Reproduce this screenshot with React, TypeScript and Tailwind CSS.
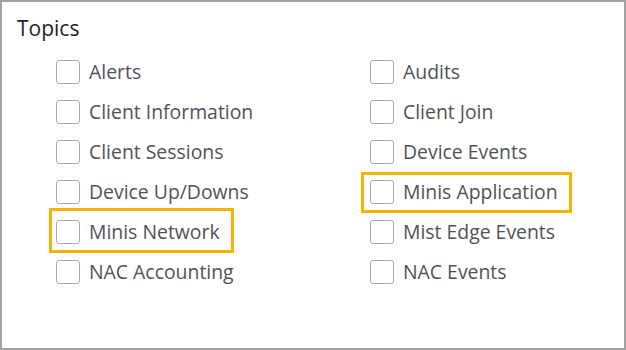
const left = ['Alerts', 'Client Information', 'Client Sessions', 'Device Up/Downs', 'Minis Network', 'NAC Accounting'];
const right = ['Audits', 'Client Join', 'Device Events', 'Minis Application', 'Mist Edge Events', 'NAC Events'];

function Topic({ label }: { label: string }) {
  return (
    <label className="relative flex h-10 items-center gap-[9px]">
      {label === 'Minis Network' && (
        <span className="absolute left-[-7px] top-[-4px] h-[45px] w-[185px] border-[3px] border-[#f5b400]" />
      )}
      {label === 'Minis Application' && (
        <span className="absolute left-[-9px] top-0 h-[41px] w-[211px] border-[3px] border-[#f5b400]" />
      )}
      <span className="h-6 w-6 shrink-0 rounded-[3px] border border-[#a9a9a9] bg-white" />
      <span className="text-[19.4px] text-[#505356]">{label}</span>
    </label>
  );
}

export default function App() {
  return (
    <div
      className="h-[350px] w-[626px] border-2 border-[#a3a3a3] bg-white pt-3"
      style={{ fontFamily: '"Open Sans", sans-serif' }}
    >
      <h2 className="pl-[15px] text-[21px] leading-7 text-[#1f2227]">Topics</h2>
      <div className="mt-[10px] grid grid-cols-[314px_1fr] grid-flow-col grid-rows-6 pl-[54px]">
        {left.map((t) => (
          <Topic key={t} label={t} />
        ))}
        {right.map((t) => (
          <Topic key={t} label={t} />
        ))}
      </div>
    </div>
  );
}
